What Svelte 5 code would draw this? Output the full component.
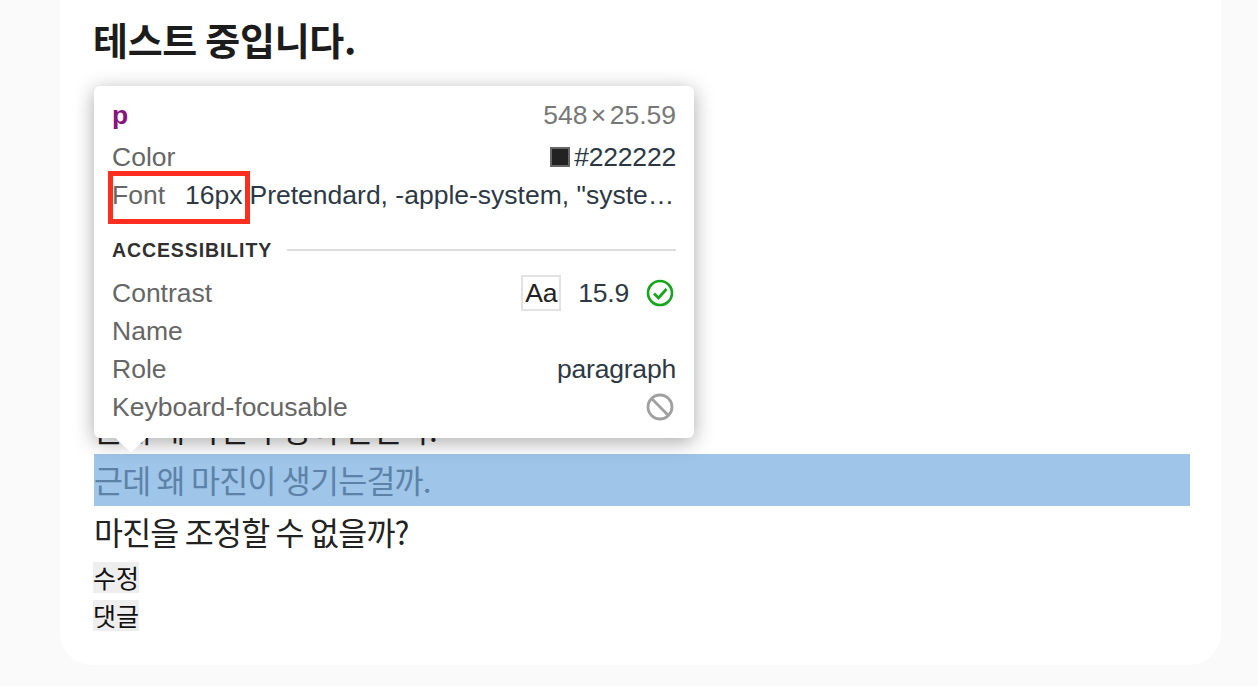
<script>
	const rows = [
		{ label: 'Contrast' },
		{ label: 'Name' },
		{ label: 'Role', value: 'paragraph' },
		{ label: 'Keyboard-focusable' }
	];
</script>

<div class="page">
	<article class="card">
		<h1>테스트 중입니다.</h1>
		<div class="body">
			<p>근데 왜 마진 수정이 안된다.</p>
			<p class="hovered">근데 왜 마진이 생기는걸까.</p>
			<p>마진을 조정할 수 없을까?</p>
			<div class="actions">
				<span class="action">수정</span>
				<span class="action">댓글</span>
			</div>

			<div class="tooltip">
				<div class="head">
					<span class="tag">p</span>
					<span class="size">548 × 25.59</span>
				</div>
				<div class="row">
					<span class="label">Color</span>
					<span class="value color"><i class="swatch"></i>#222222</span>
				</div>
				<div class="row font-row">
					<span class="label">Font</span>
					<span class="px">16px</span>
					<span class="value family">Pretendard, -apple-system, "system-ui", sans-serif</span>
				</div>
				<div class="section">
					<span>ACCESSIBILITY</span>
					<hr />
				</div>
				{#each rows as row}
					<div class="row">
						<span class="label">{row.label}</span>
						{#if row.label === 'Contrast'}
							<span class="value contrast">
								<span class="aa">Aa</span>
								<span class="ratio">15.9</span>
								<svg width="28" height="28" viewBox="0 0 28 28" fill="none">
									<circle cx="14" cy="14" r="12" stroke="#16a51c" stroke-width="2.6" />
									<path d="M8 14.5l4.5 4.5 8-9" stroke="#16a51c" stroke-width="2.8" />
								</svg>
							</span>
						{:else if row.label === 'Keyboard-focusable'}
							<svg class="value ban" width="28" height="28" viewBox="0 0 28 28" fill="none">
								<circle cx="14" cy="14" r="12" stroke="#a0a0a0" stroke-width="2.8" />
								<path d="M5.6 5.6l16.8 16.8" stroke="#a0a0a0" stroke-width="2.8" />
							</svg>
						{:else if row.value}
							<span class="value">{row.value}</span>
						{/if}
					</div>
				{/each}
				<div class="arrow"></div>
			</div>
			<div class="redbox"></div>
		</div>
	</article>
</div>

<style>
	:global(body) {
		margin: 0;
		background: #fafafa;
		overflow: hidden;
	}

	.page {
		height: 686px;
		padding: 0 37px 0 60px;
		box-sizing: border-box;
		overflow: hidden;
		font-family: 'Liberation Sans', 'Noto Sans CJK KR', sans-serif;
	}

	.card {
		height: 665px;
		padding: 0 31px 0 34px;
		box-sizing: border-box;
		background: #fff;
		border-radius: 0 0 32px 32px;
		color: #222;
		font-family: 'Noto Sans CJK KR', sans-serif;
	}

	h1 {
		margin: 0 0 0 -1px;
		padding-top: 15px;
		height: 49px;
		font-size: 38px;
		line-height: 48px;
		font-weight: 700;
		letter-spacing: -0.3px;
		color: #1c1c1c;
	}

	.body {
		position: relative;
		padding-top: 339px;
	}

	p {
		margin: 0;
		height: 51.18px;
		line-height: 50px;
		font-size: 31.5px;
		letter-spacing: -0.8px;
		white-space: nowrap;
	}

	.hovered {
		height: 52px;
		background: #9fc5e8;
		color: #5c82a8;
	}

	.actions {
		display: flex;
		flex-direction: column;
		align-items: flex-start;
		gap: 7px;
		padding-top: 5px;
		margin-left: -1px;
	}

	.action {
		background: #eee;
		font-size: 25px;
		line-height: 31px;
		height: 31px;
		color: #111;
	}

	.tooltip {
		position: absolute;
		left: 0;
		top: 22px;
		width: 600px;
		height: 352px;
		box-sizing: border-box;
		padding: 8px 18px 0;
		background: #fff;
		border-radius: 6px;
		box-shadow: 0 4px 20px rgba(0, 0, 0, 0.34);
		font-size: 26.5px;
		color: #2d3845;
		font-family: 'Liberation Sans', sans-serif;
	}

	.arrow {
		position: absolute;
		left: 26px;
		bottom: -11px;
		width: 22px;
		height: 22px;
		background: #fff;
		transform: rotate(45deg);
		box-shadow: 6px 6px 10px rgba(0, 0, 0, 0.14);
		clip-path: polygon(100% 0, 100% 100%, 0 100%, -40% 100%, 100% -40%);
	}

	.head,
	.row {
		display: flex;
		align-items: center;
		height: 38px;
		white-space: nowrap;
	}

	.head {
		justify-content: space-between;
		box-sizing: border-box;
		height: 44px;
		padding-bottom: 2px;
	}

	.tag {
		font-weight: 700;
		color: #881280;
	}

	.size {
		color: #777;
		word-spacing: -4px;
	}

	.label {
		color: #666;
	}

	.value {
		margin-left: auto;
		letter-spacing: -0.2px;
	}

	.color {
		display: flex;
		align-items: center;
		gap: 4px;
	}

	.swatch {
		display: block;
		width: 20px;
		height: 20px;
		box-sizing: border-box;
		background: #222;
		border: 2px solid #666;
	}

	.px {
		margin-left: 20px;
	}

	.family {
		margin-left: 7px;
		min-width: 0;
		overflow: hidden;
		text-overflow: ellipsis;
		letter-spacing: 0;
	}

	.section {
		display: flex;
		align-items: center;
		gap: 15px;
		height: 38px;
		margin: 17px 0 5px;
		font-size: 19.5px;
		font-weight: 700;
		color: #303030;
		letter-spacing: 0.9px;
	}

	.section hr {
		flex: 1;
		margin: 0;
		border: 0;
		height: 2px;
		background: #ddd;
	}

	.contrast {
		display: flex;
		align-items: center;
	}

	.contrast svg,
	.ban {
		margin-right: 2px;
	}

	.aa {
		box-sizing: border-box;
		width: 40px;
		height: 36px;
		line-height: 32px;
		text-align: center;
		border: 2px solid #e3e3e3;
		color: #222;
	}

	.ratio {
		margin: 0 17px 0 17px;
	}

	.redbox {
		position: absolute;
		left: 14px;
		top: 107px;
		width: 142px;
		height: 53px;
		box-sizing: border-box;
		border: 5px solid #fb2e20;
	}
</style>
